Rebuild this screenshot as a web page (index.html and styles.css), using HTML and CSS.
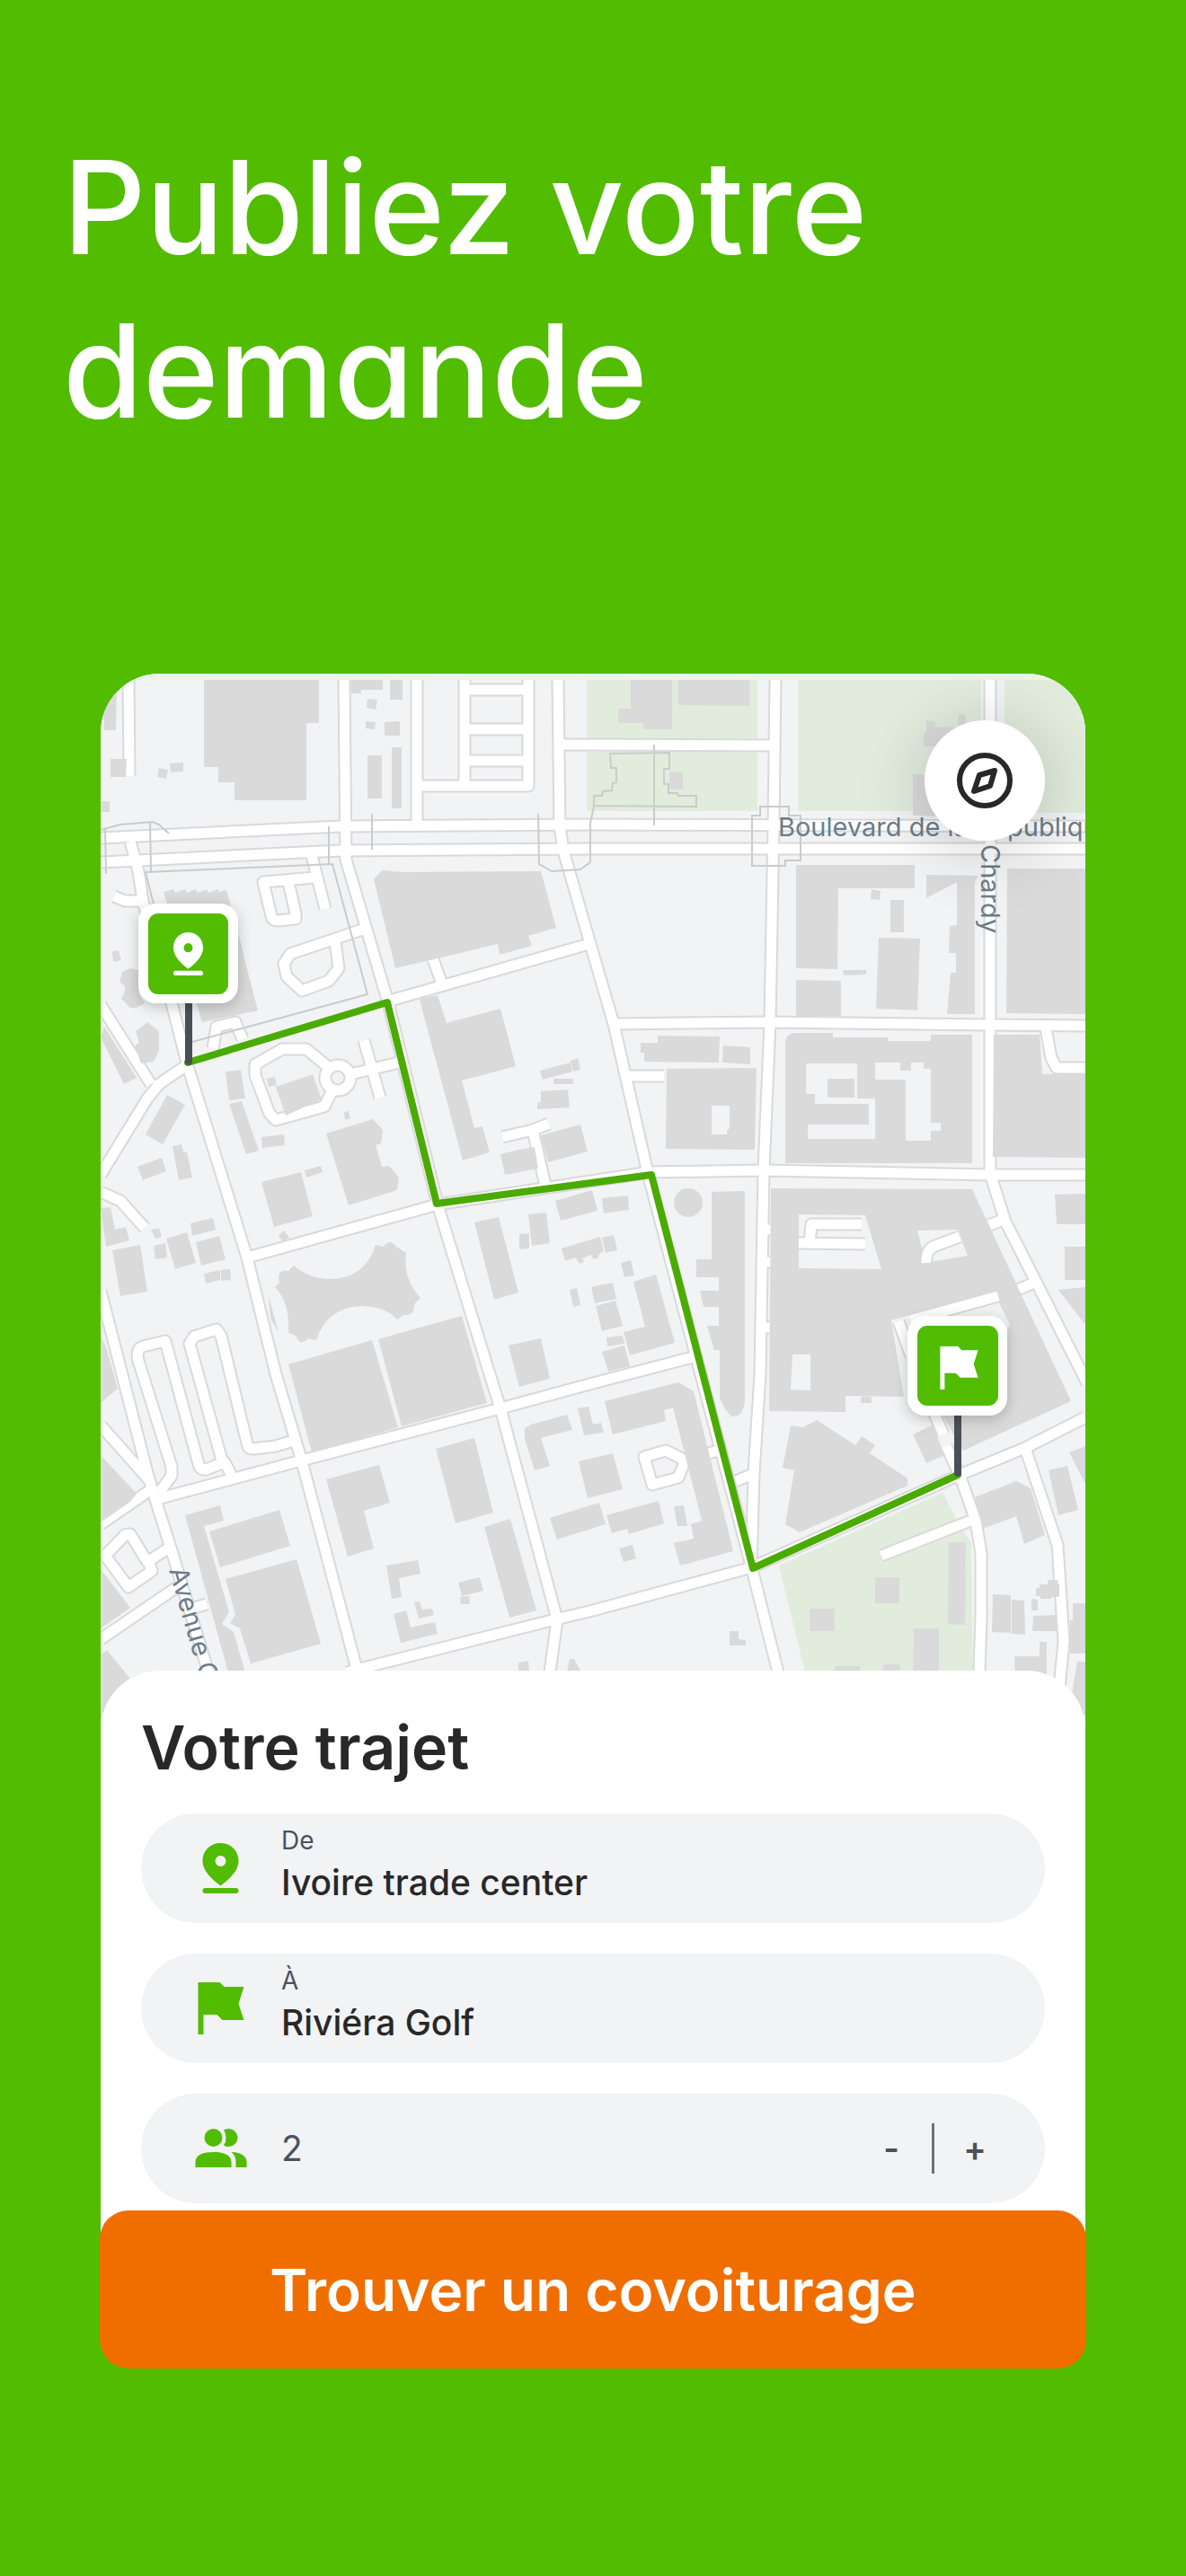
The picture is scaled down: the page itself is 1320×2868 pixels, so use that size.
FILE: index.html
```html
<!DOCTYPE html>
<html lang="fr">
<head>
    <meta charset="UTF-8">
    <meta name="viewport" content="width=device-width, initial-scale=1.0">
    <title>Publiez votre demande</title>
    <link rel="stylesheet" href="styles.css">
</head>
<body>
    <header class="hero">
        <h1>Publiez votre<br>demande</h1>
    </header>

    <main class="trip">
        <div class="card">
            <div class="map">
                <svg class="map-canvas" viewBox="112 750 1096 1166" role="img" aria-label="Carte du trajet">
                    <defs>
                        <!-- axes des rues, tracés deux fois : bordure puis chaussée -->
                        <g id="streets">
                            <path d="M143 757L144 864M383 757L385 957L432 1116L487 1341L545 1530L557 1568L620 1803L612 1862"/>
                            <path d="M464 757V920M517 757V875M588 757V875H464M517 768H588M517 812H588M517 847H588"/>
                            <path d="M621 757L623 920L627 947L655 1044L683 1140L721 1306L837 1747L866 1862"/>
                            <path d="M112 933L379 920L660 918L1208 920M112 960L379 947L660 945H1208M627 829L863 830"/>
                            <path d="M863 757L861 920L857 1138L850 1303L846 1530L839 1640L836 1747"/>
                            <path d="M1102 757V1307L1119 1360L1153 1427L1210 1540"/>
                            <path d="M683 1140L857 1138L1102 1141L1208 1142M723 1305L850 1303L1102 1308H1208M487 1341L723 1305"/>
                            <path d="M434 1114L652 1052M482 1068L491 1093"/>
                            <path d="M145 937L154 970L159 1003L191 1117L209 1187L275 1400L307 1530L336 1627L398 1862"/>
                            <path d="M127 998L139 1003H157"/>
                            <path d="M347 953L362 1012M350 977L293 982L302 1020Q303 1025 309 1025L329 1023V1017L321 982"/>
                            <path d="M403 1035L323 1062L316 1073L319 1087L336 1103L366 1092L377 1078L373 1048"/>
                            <path d="M112 1119L168 1207M209 1185L177 1207L164 1223L112 1308M112 1327L134 1337L161 1367"/>
                            <path d="M237 1167L241 1143L262 1138L270 1157"/>
                            <path d="M364 1187L341 1168H314L284 1185V1197L300 1240L307 1247L361 1232L370 1214"/>
                            <path d="M362 1200a14 14 0 1 0 28 0a14 14 0 1 0-28 0M390 1196L448 1182M405 1158L423 1222"/>
                            <path d="M275 1400L487 1341M559 1266L593 1258L611 1251M593 1258L607 1320"/>
                            <path d="M171 1670L332 1627L557 1568L660 1540L775 1510M112 1437L134 1523L164 1640L171 1663L193 1733L232 1862"/>
                            <path d="M112 1587L168 1650M112 1697L170 1657"/>
                            <path d="M117 1732L139 1709L145 1708L164 1739L190 1722M166 1741L169 1749L143 1767L117 1732M112 1825L197 1767M216 1790L230 1786"/>
                            <path d="M177 1662L191 1643V1633L154 1515Q151 1502 159 1499L184 1493L221 1630Q223 1637 229 1636L250 1628L259 1645"/>
                            <path d="M247 1626L211 1496L216 1488L241 1480L246 1487L275 1607Q276 1613 282 1613L307 1610L330 1603"/>
                            <path d="M386 1862L404 1857L618 1803L660 1793L837 1745L1068 1642L1141 1612L1208 1578"/>
                            <path d="M1039 1572L1050 1597M1053 1610L1068 1642L1086 1693L1092 1730V1800L1090 1862"/>
                            <path d="M1141 1612L1177 1720L1184 1827L1179 1880M981 1732L1083 1692M819 1649L836 1642M788 1618L804 1614"/>
                            <path d="M763 1627L757 1623L741 1615L717 1622L726 1653L755 1645L763 1625"/>
                            <path d="M697 1198H739M1101 1364L1119 1357M1133 1436L1153 1427M1164 1145L1170 1178L1176 1189H1208"/>
                            <path d="M848 1369H858M848 1405H858M847 1478H857"/>
                        </g>
                        <g id="lanes">
                            <path d="M889 1384L963 1385M959 1363H903L901 1384"/>
                            <path d="M1068 1377L1038 1388Q1030 1394 1031 1406"/>
                            <path d="M1013 1470L1111 1443M1000 1471L1014 1510"/>
                        </g>
                        <filter id="pin-shadow" x="-30%" y="-30%" width="160%" height="160%">
                            <feDropShadow dx="0" dy="4" stdDeviation="8" flood-color="#000" flood-opacity=".22"/>
                        </filter>
                    </defs>

                    <rect class="map-edge" x="112" y="750" width="1096" height="8"/>

                    <g class="park">
                        <path d="M653 757H843V822H653zM653 837H843V903H653zM888 757H1092V903H888zM1118 757H1208V905H1118z"/>
                        <path d="M867 1743L1049 1662L1065 1692L1081 1718L1083 1862H896z"/>
                    </g>

                    <use href="#streets" class="street-edge"/>
                    <use href="#streets" class="street"/>

                    <g class="building">
                        <!-- nord-ouest -->
                        <path d="M116 773L130 762L129 813H116zM123 845H141L140 865H123zM177 855L187 857L185 867L175 865zM189 850L204 849V859L190 860zM112 892H122V904H112z"/>
                        <path d="M227 757H355V805H341V891H261V871H243V854H227z"/>
                        <path d="M391 757H426V768H402V772H391zM434 757H448V779H434zM409 778L420 779L418 790L408 788zM407 803L418 804L417 812L407 811zM428 804L445 803V819H428zM409 841H425V889H409zM436 832H447V900H436z"/>
                        <path d="M416 979L425 969L448 971L602 970L619 1033L588 1042L592 1053L556 1063L554 1051L440 1078z"/>
                        <path d="M182 993L193 990L195 994L206 990L208 994L218 990L220 994L230 990L232 994L242 990L244 993L252 991L268 1050L276 1083L287 1125L225 1138z"/>
                        <path d="M124 1060L132 1058L135 1069L127 1071zM136 1082L145 1078L154 1080L155 1107L161 1117L152 1122H145L135 1112L139 1103V1098L133 1093z"/>
                        <!-- nord-est -->
                        <path d="M702 757H748V812H716V805H688V789H702zM755 757H834V786L755 785zM745 859L760 860V879L745 878z"/>
                        <path d="M1031 802L1041 803V816L1031 815zM1028 817L1042 809L1065 810L1060 831H1028zM1067 795L1075 796L1074 808H1066zM1016 862H1035L1050 909L1016 908z"/>
                        <path d="M886 963H1018V989H933L932 1079L886 1078zM970 990L980 992L979 1002L969 1001zM991 1002H1006V1038H991zM978 1044L1024 1045L1021 1125L975 1123zM938 1080H964V1085L939 1086zM886 1091L936 1092V1131H886z"/>
                        <path d="M1031 974L1089 975L1085 982V1129H1054L1058 1083H1064V1061H1056L1057 1031L1065 1030V982L1031 1000zM1121 967H1208V1129L1120 1128z"/>
                        <!-- quartier ouest -->
                        <path d="M112 1155L116 1143L152 1200L138 1207zM151 1148L164 1138L177 1148V1170L171 1182L157 1184L150 1165L155 1160z"/>
                        <path d="M186 1219L206 1230L181 1274L162 1263zM192 1276L202 1274L204 1282L208 1283L214 1311L199 1314zM153 1299L180 1289L185 1304L159 1314z"/>
                        <path d="M251 1193L268 1191L273 1223L255 1225zM255 1229L269 1226L288 1281L274 1285zM291 1266L316 1263L317 1275L292 1278zM307 1210L348 1196L358 1224L318 1242zM297 1201L306 1199L308 1208L299 1210z"/>
                        <path d="M363 1262L415 1246L426 1258L424 1273L418 1275L425 1299L433 1298L444 1311L442 1325L388 1342zM291 1316L335 1305L348 1354L305 1366zM339 1303L357 1298L359 1305L341 1311zM383 1238L388 1237L390 1245L384 1247zM310 1375L316 1370L322 1378L314 1382z"/>
                        <path d="M112 1345L123 1344L128 1369L140 1366L144 1381L118 1388zM125 1392L156 1386L164 1438L134 1443zM168 1369L177 1367L180 1377L173 1379zM171 1387L184 1384L186 1400L173 1402zM185 1379L208 1372L218 1406L195 1413zM212 1362L237 1356L240 1369L214 1376zM218 1383L244 1376L251 1402L224 1409zM227 1418L245 1414V1425L229 1429zM246 1414L256 1413L257 1425L246 1426z"/>
                        <path d="M467 1112L487 1108L497 1139L557 1123L574 1187L514 1203L528 1256L537 1254L545 1283L515 1292L472 1132z"/>
                        <path d="M601 1192L635 1183L637 1193L604 1202zM635 1181L643 1178L646 1191L638 1193zM616 1201H638V1207H616zM602 1215L632 1213L634 1233L598 1235V1228L602 1227zM602 1264L646 1252L654 1282L610 1294zM557 1285L577 1280L595 1277L599 1301L562 1308z"/>
                        <!-- stade -->
                        <path d="M327 1409Q343 1424 370 1424Q407 1422 418 1386L427 1388Q434 1378 441 1388L452 1395Q448 1423 468 1445L461 1452Q462 1465 450 1464L442 1469Q429 1455 404 1454Q364 1455 352 1492L343 1490Q334 1500 329 1487L321 1484Q323 1450 306 1433L311 1428Q307 1413 321 1415zM299 1443L310 1483L301 1468z"/>
                        <path d="M321 1519L414 1492L443 1589L347 1617zM421 1491L514 1465L542 1562L447 1588z"/>
                        <!-- centre -->
                        <path d="M528 1361L555 1355L577 1439L550 1447zM566 1498L602 1490L612 1535L578 1544zM588 1352L608 1350L612 1384L592 1387zM578 1374L589 1373V1390L578 1391zM634 1436L642 1434L646 1453L638 1455z"/>
                        <path d="M618 1337L659 1325L665 1348L624 1359zM670 1334L699 1331L700 1347L672 1351zM625 1390L668 1377L672 1393L667 1396L665 1401L660 1402L658 1397L648 1401L650 1405L645 1407L641 1400L629 1404zM670 1378L683 1375L687 1392L674 1395z"/>
                        <path d="M691 1406L702 1403L706 1420L695 1422zM658 1433L682 1428L686 1446L662 1451zM663 1454L685 1448L693 1476L670 1482zM675 1489L693 1487L695 1496L676 1499zM670 1505L695 1498L701 1521L677 1527zM730 1419L751 1495L701 1509L694 1483L718 1477L705 1427z"/>
                        <path d="M673 1560L755 1539L772 1549L816 1727L757 1743L750 1718L772 1713L769 1697L781 1693L749 1567L739 1570L741 1582L682 1597zM643 1568L655 1566L660 1586L669 1584L672 1595L650 1598z"/>
                        <path d="M644 1627L682 1618L693 1658L654 1668zM612 1690L667 1673L674 1697L620 1714zM675 1687L733 1671L739 1696L700 1708L698 1702L681 1707zM750 1677L761 1676L765 1699L754 1699zM689 1724L704 1720L708 1735L694 1739zM812 1816H822V1825L830 1826V1832H812z"/>
                        <path d="M584 1590L591 1586L631 1575L637 1592L602 1601L612 1632L595 1637L584 1602zM363 1647L422 1631L434 1673L405 1682L416 1724L387 1733zM485 1613L528 1601L549 1684L507 1696zM539 1700L568 1691L597 1793L567 1801z"/>
                        <path d="M430 1743L465 1737L468 1752L444 1757L447 1778L436 1780zM510 1762L534 1756L538 1771L514 1777zM512 1778L522 1777L523 1786H513zM461 1784L467 1783L470 1792L481 1791L483 1798L466 1802zM438 1797L452 1793L457 1812L484 1806L487 1819L446 1829zM577 1851L588 1849L589 1862H577zM634 1847H639L647 1862H631z"/>
                        <!-- sud-ouest -->
                        <path d="M206 1687L245 1676L249 1693L227 1699L255 1795L247 1808L260 1817L273 1862H254zM233 1705L311 1681L323 1721L245 1745zM251 1758L330 1736L357 1830L279 1852L267 1813L256 1807L262 1797z"/>
                        <path d="M112 1487L118 1500L131 1546L112 1562zM112 1620L152 1663L145 1672L112 1695zM112 1747L145 1790L112 1813zM112 1842L119 1837L145 1869L112 1914z"/>
                        <!-- est -->
                        <path d="M713 1161H732V1153L801 1154L800 1183L717 1182V1172H713zM805 1164L835 1166V1185L804 1183z"/>
                        <path fill-rule="evenodd" d="M742 1190L842 1189L840 1280L741 1279zM792 1231H812V1256L809 1259V1263H792z"/>
                        <path fill-rule="evenodd" d="M874 1295V1162Q874 1150 886 1150H927V1155H988V1159H1036V1152H1082V1295zM897 1184H954V1223H974V1268H899V1252H967V1229H907V1218H897zM921 1201H951V1222H921zM974 1183H1002V1192H1014V1183H1028V1190H1036V1250H1047V1259H1036V1270H1008V1202H974z"/>
                        <path d="M1106 1152H1157L1160 1196H1208V1289L1105 1288z"/>
                        <circle cx="766" cy="1339" r="16"/>
                        <path d="M792 1327L829 1326V1558Q828 1577 816 1577Q810 1577 801 1556V1503H795L787 1476H800V1455H783L779 1437H800V1422H775V1402H792z"/>
                        <path fill-rule="evenodd" d="M858 1323L1082 1324L1192 1560L1072 1615L1040 1560L1006 1555L941 1554V1572L856 1571zM889 1352L963 1353L981 1413L889 1412zM1021 1370L1066 1369L1077 1398L1030 1406zM882 1508H902V1548L880 1547zM992 1470L1106 1438L1124 1475L1110 1500H1050L1025 1555H1006z"/>
                        <path d="M958 1555H970V1562H958zM1016 1597L1037 1587L1052 1620L1031 1629zM880 1587L894 1589L909 1581L952 1609L959 1599L974 1609L968 1618L1010 1646V1654L890 1706L874 1697L884 1637L871 1634z"/>
                        <path d="M1174 1330L1208 1329V1363H1176zM1185 1388H1208V1425H1185zM1178 1436L1208 1433V1475z"/>
                        <path d="M1085 1667L1131 1649L1147 1657L1163 1709L1140 1719L1131 1688L1094 1702zM1167 1637L1188 1632L1200 1681L1178 1687zM1190 1617L1208 1610V1652z"/>
                        <path d="M1105 1775L1125 1776V1818L1104 1817zM1126 1781L1140 1782L1141 1820L1126 1819zM1153 1768H1157V1764H1166V1759H1177V1763H1179V1778H1170V1780H1158V1777H1153zM1148 1780L1155 1781V1793H1148zM1150 1799L1176 1798V1816H1149zM1157 1828H1165V1868H1130L1129 1844H1157zM1194 1785H1208V1841H1191V1804H1194zM1199 1850H1208V1912L1193 1885z"/>
                        <path d="M1056 1717H1075L1074 1809L1055 1808zM974 1756H1001V1785H974zM901 1791H929V1816H901zM1017 1813H1045V1862H1016zM929 1855H957V1862H929zM983 1853H1001L1003 1862H983z"/>
                    </g>

                    <use href="#lanes" class="street-edge"/>
                    <use href="#lanes" class="street"/>

                    <g class="subway">
                        <path d="M112 924L134 918L170 915L177 918L188 928M117 923L118 973M167 916L168 970M171 1007L162 971L370 962L409 1107L214 1160M366 920V962M414 906V946"/>
                        <path d="M599 906L600 962L614 970L646 968L657 960V917L661 897L775 898V886H755L754 883H744V873H739V856H745V838L679 839L680 855H686V871L682 872L681 880L671 881L670 886H661V897M728 829V919"/>
                        <path d="M846 898H878V908H891V958H874V964H837V908H846z"/>
                    </g>

                    <g class="street-name">
                        <text x="866" y="931">Boulevard de la République</text>
                        <text transform="translate(1092 940) rotate(90)">Chardy</text>
                        <text transform="translate(188 1748) rotate(74)">Avenue Chardy</text>
                    </g>

                    <path class="route" d="M209 1183L431 1116L486 1340L725 1308L838 1746L1066 1642"/>

                    <path class="pole" d="M210 1110V1182M1066 1570V1640"/>
                    <g filter="url(#pin-shadow)">
                        <rect class="pin-frame" x="154" y="1006" width="111" height="111" rx="20"/>
                        <rect class="pin-frame" x="1010" y="1465" width="111" height="111" rx="20"/>
                    </g>
                    <rect class="pin-fill" x="165" y="1017" width="89" height="90" rx="11"/>
                    <rect class="pin-fill" x="1021" y="1476" width="90" height="89" rx="11"/>
                    <svg class="pin-glyph" x="193" y="1038" width="33" height="48" viewBox="0 0 40 56" preserveAspectRatio="none">
                        <path fill-rule="evenodd" d="M20 0C9 0 0 8 0 20c0 9 7 18 20 27.500C33 38 40 29 40 20C40 8 31 0 20 0zM20 14a6 6 0 1 1 0 12a6 6 0 0 1 0-12z"/>
                        <rect y="50" width="40" height="6" rx="3"/>
                    </svg>
                    <svg class="pin-glyph" x="1046" y="1499" width="43" height="48" viewBox="0 0 51 58">
                        <path d="M0 0H24L29 5H51L45 24L51 42H27L21 36H6V58H0z"/>
                    </svg>
                </svg>
                <button class="compass" type="button" aria-label="Recentrer la carte">
                    <svg viewBox="0 0 64 64" width="64" height="64">
                        <circle cx="32" cy="32" r="28"/>
                        <path d="M43 21L26 26L20 44L38 38z"/>
                    </svg>
                </button>
            </div>

            <form class="sheet" id="trip-form">
                <h2>Votre trajet</h2>
                <div class="field">
                    <svg class="field-icon" viewBox="-8 -1 57 58">
                        <path fill-rule="evenodd" d="M20 0C9 0 0 8 0 20c0 9 7 18 20 27.500C33 38 40 29 40 20C40 8 31 0 20 0zM20 14a6 6 0 1 1 0 12a6 6 0 0 1 0-12z"/>
                        <rect y="50" width="40" height="6" rx="3"/>
                    </svg>
                    <div class="field-text">
                        <label for="from">De</label>
                        <input id="from" type="text" value="Ivoire trade center">
                    </div>
                </div>
                <div class="field">
                    <svg class="field-icon" viewBox="-3 0 57 58">
                        <path d="M0 0H24L29 5H51L45 24L51 42H27L21 36H6V58H0z"/>
                    </svg>
                    <div class="field-text">
                        <label for="to">À</label>
                        <input id="to" type="text" value="Riviéra Golf">
                    </div>
                </div>
                <div class="field">
                    <svg class="field-icon" viewBox="0 -7 57 58">
                        <circle cx="20" cy="10" r="10"/>
                        <path d="M31.500 1.500Q34 0 37 0a10 10 0 0 1 0 20q-3 0-5.500-1.500Q34 15 34 10t-2.500-8.500z"/>
                        <path d="M0 43V37C0 29 9 26 20 26S40 29 40 37V43zM40 26C51 26 57 31 57 37V43H45V37Q45 30 40 26z"/>
                    </svg>
                    <div class="field-text">
                        <input id="seats" class="seats" type="text" inputmode="numeric" value="2" aria-label="Nombre de passagers">
                    </div>
                    <div class="stepper">
                        <button type="button" onclick="changeSeats(-1)" aria-label="Moins">-</button>
                        <span class="divider"></span>
                        <button type="button" onclick="changeSeats(1)" aria-label="Plus">+</button>
                    </div>
                </div>
            </form>
        </div>
        <button class="submit" type="submit" form="trip-form">Trouver un covoiturage</button>
    </main>

    <script>
        function changeSeats(step) {
            const seats = document.getElementById('seats');
            seats.value = Math.max(1, Number(seats.value) + step);
        }
    </script>
</body>
</html>
```
FILE: styles.css
```css
* {
    box-sizing: border-box;
}
body {
    margin: 0;
    min-height: 100vh;
    background-color: #51bc00;
    font-family: Inter, "Liberation Sans", sans-serif;
    color: #282828;
}
.hero {
    padding: 140px 70px 246px;
}
.hero h1 {
    margin: 0;
    font-size: 144px;
    line-height: 182px;
    font-weight: 450;
    font-feature-settings: "cv11";
    color: white;
}

/* card */
.trip {
    padding: 0 111px 231px;
}
.card {
    margin: 0 1px;
    border-radius: 66px 66px 0 0;
    background: white;
    overflow: hidden;
}

/* map */
.map {
    position: relative;
    background: #f2f3f5;
}
.map-canvas {
    display: block;
    width: 100%;
    height: auto;
}
.map-edge {
    fill: #edf4e8;
}
.park {
    fill: #e1ecdd;
}
.street-edge,
.street {
    fill: none;
    stroke: #d9d9d9;
    stroke-width: 15px;
    stroke-linejoin: round;
}
.street {
    stroke: white;
    stroke-width: 11px;
}
.building {
    fill: #dadada;
}
.subway {
    fill: none;
    stroke: #cbcbcb;
    stroke-width: 2px;
}
.street-name {
    fill: #6b7d8a;
    font-size: 29px;
}
.route {
    fill: none;
    stroke: #4aab00;
    stroke-width: 8px;
    stroke-linejoin: round;
    stroke-linecap: round;
}
.pole {
    stroke: #4a4f59;
    stroke-width: 8px;
    stroke-linecap: round;
}
.pin-frame,
.pin-glyph {
    fill: white;
}
.pin-fill {
    fill: #51bc00;
}
.compass {
    position: absolute;
    top: 52px;
    right: 45px;
    width: 134px;
    height: 134px;
    padding: 0;
    border: none;
    border-radius: 50%;
    background: white;
    box-shadow: 0 8px 80px rgba(0, 0, 0, 0.2);
    display: flex;
    align-items: center;
    justify-content: center;
    cursor: pointer;
}
.compass svg {
    fill: none;
    stroke: #282828;
    stroke-width: 6px;
    stroke-linejoin: round;
}

/* bottom sheet */
.sheet {
    position: relative;
    margin-top: -56px;
    padding: 45px 45px 32px;
    border-radius: 66px 66px 0 0;
    background: white;
    display: flex;
    flex-direction: column;
    gap: 34px;
}
.sheet h2 {
    margin: 0;
    font-size: 68px;
    line-height: 80px;
    font-weight: 600;
}
.field {
    display: flex;
    align-items: center;
    height: 122px;
    padding: 0 58px 0 60px;
    border-radius: 61px;
    background: #f2f3f5;
}
.field-icon {
    width: 58px;
    height: 58px;
    margin-right: 38px;
    fill: #51bc00;
    flex: none;
}
.field-text {
    display: flex;
    flex-direction: column;
    flex: 1;
    min-width: 0;
}
.field label {
    margin-top: -8px;
    font-size: 28px;
    line-height: 40px;
    color: #4a5260;
}
.field input {
    width: 100%;
    padding: 0;
    border: none;
    background: none;
    font-family: inherit;
    font-size: 39px;
    line-height: 54px;
    height: 54px;
    font-weight: 500;
    color: #282828;
}
.field .seats {
    font-weight: 400;
    color: #4a5260;
}
.stepper {
    display: flex;
    align-items: center;
    gap: 25px;
}
.stepper button {
    width: 40px;
    height: 56px;
    padding: 0;
    border: none;
    background: none;
    font-family: inherit;
    font-size: 38px;
    font-weight: 600;
    color: #4a5260;
    cursor: pointer;
}
.divider {
    width: 3px;
    height: 56px;
    background: #6b7280;
}
.submit {
    position: relative;
    display: block;
    width: 100%;
    height: 176px;
    margin-top: -24px;
    border: none;
    border-radius: 32px;
    background: #f06e00;
    color: white;
    font-family: inherit;
    font-size: 64px;
    font-weight: 600;
    cursor: pointer;
}

@media (max-width: 900px) {
    .hero {
        padding: 60px 24px;
    }
    .hero h1 {
        font-size: 64px;
        line-height: 80px;
    }
    .trip {
        padding: 0 24px 60px;
    }
    .submit {
        font-size: 32px;
    }
}
```
